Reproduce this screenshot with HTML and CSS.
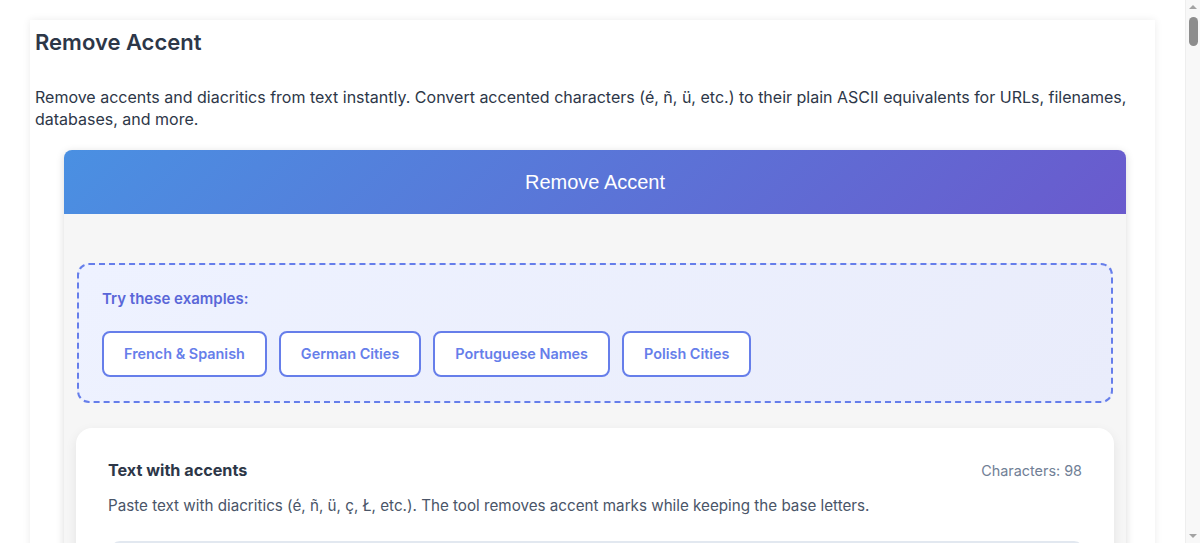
FILE: index.html
```html
<!DOCTYPE html>
<html lang="en">
<head>
<meta charset="utf-8">
<title>Remove Accent</title>
<link rel="stylesheet" href="styles.css">
</head>
<body>
<div class="page">
  <h1 class="page-title">Remove Accent</h1>
  <p class="page-intro">Remove accents and diacritics from text instantly. Convert accented characters (é, ñ, ü, etc.) to their plain ASCII equivalents for URLs, filenames, databases, and more.</p>

  <div class="tool">
    <div class="tool-header">Remove Accent</div>
    <div class="tool-body">
      <div class="examples">
        <div class="examples-label">Try these examples:</div>
        <div class="examples-row">
          <button class="ex-btn">French &amp; Spanish</button>
          <button class="ex-btn">German Cities</button>
          <button class="ex-btn">Portuguese Names</button>
          <button class="ex-btn">Polish Cities</button>
        </div>
      </div>

      <div class="panel">
        <div class="panel-head">
          <span class="panel-title">Text with accents</span>
          <span class="panel-count">Characters: 98</span>
        </div>
        <p class="panel-desc">Paste text with diacritics (é, ñ, ü, ç, Ł, etc.). The tool removes accent marks while keeping the base letters.</p>
        <textarea class="panel-input">Crème brûlée, jalapeño, Zürich, São Paulo, Łódź, façade, naïve café, Ångström, résumé, piñata.</textarea>
      </div>

      <div class="panel">
        <div class="panel-head">
          <span class="panel-title">Plain text</span>
          <span class="panel-count">Characters: 98</span>
        </div>
        <textarea class="panel-input">Creme brulee, jalapeno, Zurich, Sao Paulo, Lodz, facade, naive cafe, Angstrom, resume, pinata.</textarea>
      </div>
    </div>
  </div>
</div>
<div class="scrollbar" aria-hidden="true">
  <span class="sb-arrow sb-up"></span>
  <span class="sb-thumb"></span>
  <span class="sb-arrow sb-down"></span>
</div>
</body>
</html>
```

FILE: styles.css
```css
* { box-sizing: border-box; }

html {
  margin: 0;
  padding: 0;
  overflow: hidden;
  background: #ffffff;
}

body {
  margin: 0;
  width: 1185px;
  font-family: Inter, "Noto Sans", sans-serif;
  color: #2d3748;
  padding: 20px 30px 40px;
  background: #ffffff;
}

.page {
  background: #ffffff;
  box-shadow: 0 0 8px rgba(0, 0, 0, 0.08);
  padding: 0 0 30px 5px;
}

.page-title {
  margin: 0;
  padding-top: 8px;
  font-size: 22px;
  line-height: 28px;
  font-weight: 600;
  color: #2d3748;
}

.page-intro {
  margin: 30px 0 20px;
  font-size: 16px;
  line-height: 22px;
  color: #2d3748;
}

.tool {
  margin: 0 29px;
  border-radius: 8px;
  overflow: hidden;
  background: #f6f6f6;
  box-shadow: 0 2px 8px rgba(0, 0, 0, 0.15);
}

.tool-header {
  height: 64px;
  display: flex;
  align-items: center;
  justify-content: center;
  background: linear-gradient(135deg, #4a90e2 0%, #6a5acd 100%);
  color: #ffffff;
  font-family: "Liberation Sans", Arial, sans-serif;
  font-size: 20px;
}

.tool-body {
  padding: 49px 12px 24px;
  display: flex;
  flex-direction: column;
  gap: 25px;
}

.examples {
  margin: 0 1px;
  border: 2px dashed #667eea;
  border-radius: 12px;
  background: linear-gradient(135deg, #eef2ff 0%, #e9ecfb 100%);
  padding: 24px 23px 24px;
}

.examples-label {
  font-size: 15px;
  line-height: 20px;
  font-weight: 600;
  color: #5a67d8;
  margin-bottom: 22px;
}

.examples-row {
  display: flex;
  flex-wrap: wrap;
  gap: 12px;
}

.ex-btn {
  font-family: Inter, "Noto Sans", sans-serif;
  font-size: 14.4px;
  line-height: 18px;
  font-weight: 600;
  color: #667eea;
  background: #ffffff;
  border: 2px solid #667eea;
  border-radius: 8px;
  padding: 12px 20px;
  cursor: pointer;
}

.panel {
  background: #ffffff;
  border-radius: 16px;
  box-shadow: 0 4px 12px rgba(0, 0, 0, 0.08);
  padding: 31px 32px 28px;
}

.panel-head {
  display: flex;
  justify-content: space-between;
  align-items: center;
}

.panel-title {
  font-size: 16.2px;
  line-height: 22px;
  font-weight: 700;
  color: #2d3748;
}

.panel-count {
  font-size: 14.4px;
  color: #718096;
}

.panel-desc {
  margin: 14px 0 24px;
  font-size: 15.2px;
  line-height: 22px;
  color: #4a5568;
}

.panel-input {
  display: block;
  width: 100%;
  height: 160px;
  margin-left: 2px;
  border: 2px solid #e2e8f0;
  border-radius: 10px;
  background: #f8fafc;
  padding: 20px 16px 14px;
  font-family: Inter, "Noto Sans", sans-serif;
  font-size: 15px;
  color: #2d3748;
  resize: vertical;
}

/* fake browser scrollbar overlaying the right edge */
.scrollbar {
  position: fixed;
  top: 0;
  right: 0;
  width: 15px;
  height: 100%;
  background: #f8f8f8;
  border-left: 1px solid #eeeeee;
}

.sb-thumb {
  position: absolute;
  top: 17px;
  left: 3px;
  width: 9px;
  height: 29px;
  border-radius: 5px;
  background: #8d8d8d;
}

.sb-arrow {
  position: absolute;
  left: 3px;
  width: 0;
  height: 0;
  border-left: 4px solid transparent;
  border-right: 4px solid transparent;
}

.sb-up {
  top: 5px;
  border-bottom: 4px solid #a3a3a3;
}

.sb-down {
  bottom: 5px;
  border-top: 4px solid #a3a3a3;
}
```
